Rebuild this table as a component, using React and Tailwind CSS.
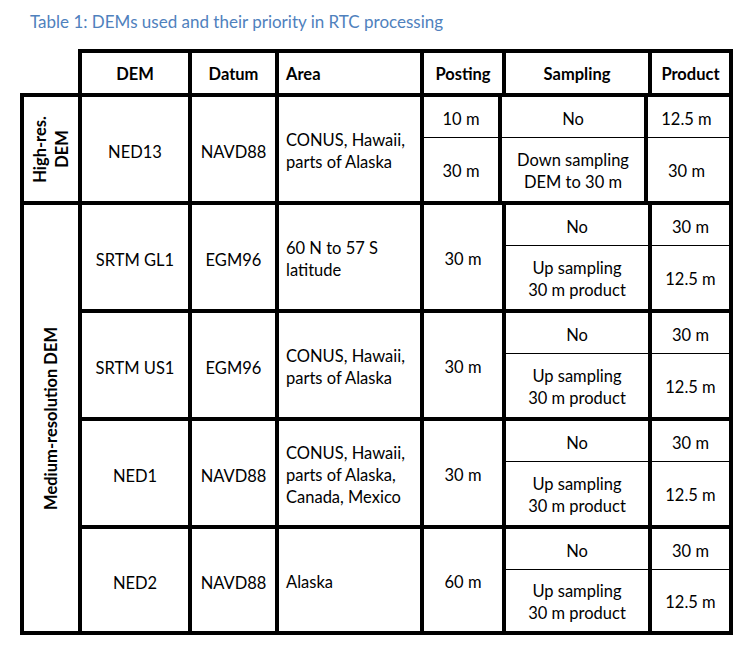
import React from 'react';

const groups = [
  {
    dem: 'NED13',
    datum: 'NAVD88',
    area: ['CONUS, Hawaii,', 'parts of Alaska'],
    posting: ['10 m', '30 m'],
    sampling: [['No'], ['Down sampling', 'DEM to 30 m']],
    product: ['12.5 m', '30 m'],
    h: 'h-[104px]',
  },
  {
    dem: 'SRTM GL1',
    datum: 'EGM96',
    area: ['60 N to 57 S', 'latitude'],
    posting: '30 m',
    sampling: [['No'], ['Up sampling', '30 m product']],
    product: ['30 m', '12.5 m'],
    h: 'h-[104px]',
  },
  {
    dem: 'SRTM US1',
    datum: 'EGM96',
    area: ['CONUS, Hawaii,', 'parts of Alaska'],
    posting: '30 m',
    sampling: [['No'], ['Up sampling', '30 m product']],
    product: ['30 m', '12.5 m'],
    h: 'h-[104px]',
  },
  {
    dem: 'NED1',
    datum: 'NAVD88',
    area: ['CONUS, Hawaii,', 'parts of Alaska,', 'Canada, Mexico'],
    posting: '30 m',
    sampling: [['No'], ['Up sampling', '30 m product']],
    product: ['30 m', '12.5 m'],
    h: 'h-[104px]',
  },
  {
    dem: 'NED2',
    datum: 'NAVD88',
    area: ['Alaska'],
    posting: '60 m',
    sampling: [['No'], ['Up sampling', '30 m product']],
    product: ['30 m', '12.5 m'],
    h: 'h-[102px]',
  },
];

const Lines = ({ lines }) => (
  <div>
    {lines.map((l) => (
      <div key={l}>{l}</div>
    ))}
  </div>
);

const SubRows = ({ g, withPosting }) => (
  <div className="flex flex-1 flex-col">
    {[0, 1].map((i) => (
      <div
        key={i}
        className={'flex ' + (i === 0 ? 'h-[41px] border-b border-black' : 'flex-1')}
      >
        {withPosting && (
          <div className="flex w-[78px] items-center justify-center border-r-4 border-black pt-[3px]">
            {g.posting[i]}
          </div>
        )}
        <div className="flex w-[142px] items-center justify-center pt-[3px] text-center">
          <Lines lines={g.sampling[i]} />
        </div>
        <div className="flex w-[81px] items-center justify-center border-l-4 border-black pt-[3px]">
          {g.product[i]}
        </div>
      </div>
    ))}
  </div>
);

const Group = ({ g }) => {
  const split = Array.isArray(g.posting);
  return (
    <div className={'flex ' + g.h}>
      <div className="flex w-[110px] items-center justify-center border-r-4 border-black pt-[5px]">
        {g.dem}
      </div>
      <div className="flex w-[87px] items-center justify-center border-r-4 border-black pt-[5px]">
        {g.datum}
      </div>
      <div className="flex w-[145px] items-center border-r-4 border-black pl-[7px] pt-[3px]">
        <Lines lines={g.area} />
      </div>
      {!split && (
        <div className="flex w-[82px] items-center justify-center border-r-4 border-black pt-[3px]">
          {g.posting}
        </div>
      )}
      <SubRows g={g} withPosting={split} />
    </div>
  );
};

export default function App() {
  const [high, ...medium] = groups;
  return (
    <div className="min-h-screen bg-white pl-[20px] pt-[11px] font-['Lato','Liberation_Sans',sans-serif] text-[16.5px] leading-[22px] text-black">
      <div className="pl-[10px] text-[17px] text-[#4f81bd]">
        Table 1: DEMs used and their priority in RTC processing
      </div>

      <div className="mt-[16px] w-[713px]">
        {/* header */}
        <div className="ml-[58px] flex h-[44px] border-x-4 border-t-4 border-black font-bold">
          <div className="flex w-[110px] items-center justify-center border-r-4 border-black pt-[2px]">DEM</div>
          <div className="flex w-[87px] items-center justify-center border-r-4 border-black pt-[2px]">Datum</div>
          <div className="flex w-[145px] items-center border-r-4 border-black pl-[7px] pt-[2px]">Area</div>
          <div className="flex w-[82px] items-center justify-center border-r-4 border-black pt-[2px]">Posting</div>
          <div className="flex w-[146px] items-center justify-center border-r-4 border-black pt-[2px]">Sampling</div>
          <div className="flex flex-1 items-center justify-center pt-[2px]">Product</div>
        </div>

        {/* body */}
        <div className="border-4 border-black">
          <div className="flex">
            <div className="flex w-[58px] items-center justify-center border-r-4 border-black font-bold">
              <div className="rotate-180 text-center [writing-mode:vertical-rl]">
                High-res.
                <br />
                DEM
              </div>
            </div>
            <div className="flex-1">
              <Group g={high} />
            </div>
          </div>
          <div className="flex border-t-4 border-black">
            <div className="flex w-[58px] items-center justify-center border-r-4 border-black font-bold">
              <div className="rotate-180 [writing-mode:vertical-rl]">Medium-resolution DEM</div>
            </div>
            <div className="flex-1">
              {medium.map((g, i) => (
                <div key={g.dem} className={i > 0 ? 'border-t-4 border-black' : ''}>
                  <Group g={g} />
                </div>
              ))}
            </div>
          </div>
        </div>
      </div>
    </div>
  );
}
